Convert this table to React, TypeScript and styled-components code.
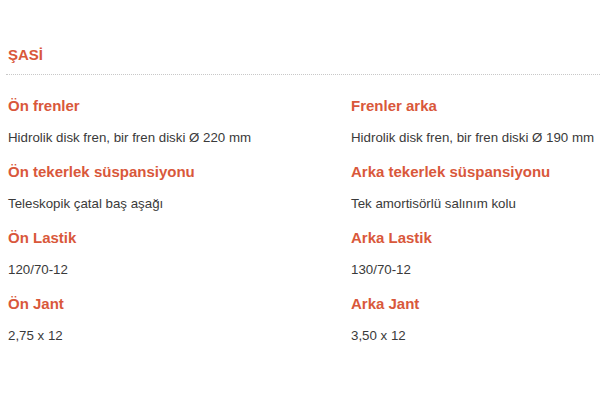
import styled, { createGlobalStyle } from "styled-components";

const GlobalStyle = createGlobalStyle`
  body {
    margin: 0;
    background: #ffffff;
    font-family: "Liberation Sans", Arial, sans-serif;
  }
`;

const Section = styled.section`
  padding: 45px 0 0 8px;
`;

const Title = styled.h2`
  margin: 0;
  font-size: 15px;
  font-weight: bold;
  line-height: 20px;
  color: #d9583b;
`;

const Divider = styled.hr`
  margin: 9px 0 0 -2px;
  border: 0;
  border-top: 1px dotted #c8c8c8;
`;

const SpecGrid = styled.dl`
  display: grid;
  grid-template-columns: 343px 1fr;
  row-gap: 13px;
  margin: 21px 0 0;
`;

const Spec = styled.div`
  display: flex;
  flex-direction: column;
  gap: 11px;
`;

const Label = styled.dt`
  font-size: 15px;
  font-weight: bold;
  line-height: 20px;
  color: #d9583b;
`;

const Value = styled.dd`
  margin: 0;
  font-size: 13.3px;
  line-height: 22px;
  color: #3a3a3a;
`;

const specs = [
  ["Ön frenler", "Hidrolik disk fren, bir fren diski Ø 220 mm"],
  ["Frenler arka", "Hidrolik disk fren, bir fren diski Ø 190 mm"],
  ["Ön tekerlek süspansiyonu", "Teleskopik çatal baş aşağı"],
  ["Arka tekerlek süspansiyonu", "Tek amortisörlü salınım kolu"],
  ["Ön Lastik", "120/70-12"],
  ["Arka Lastik", "130/70-12"],
  ["Ön Jant", "2,75 x 12"],
  ["Arka Jant", "3,50 x 12"],
];

export default function App() {
  return (
    <>
      <GlobalStyle />
      <Section>
        <Title>ŞASİ</Title>
        <Divider />
        <SpecGrid>
          {specs.map(([label, value]) => (
            <Spec key={label}>
              <Label>{label}</Label>
              <Value>{value}</Value>
            </Spec>
          ))}
        </SpecGrid>
      </Section>
    </>
  );
}
